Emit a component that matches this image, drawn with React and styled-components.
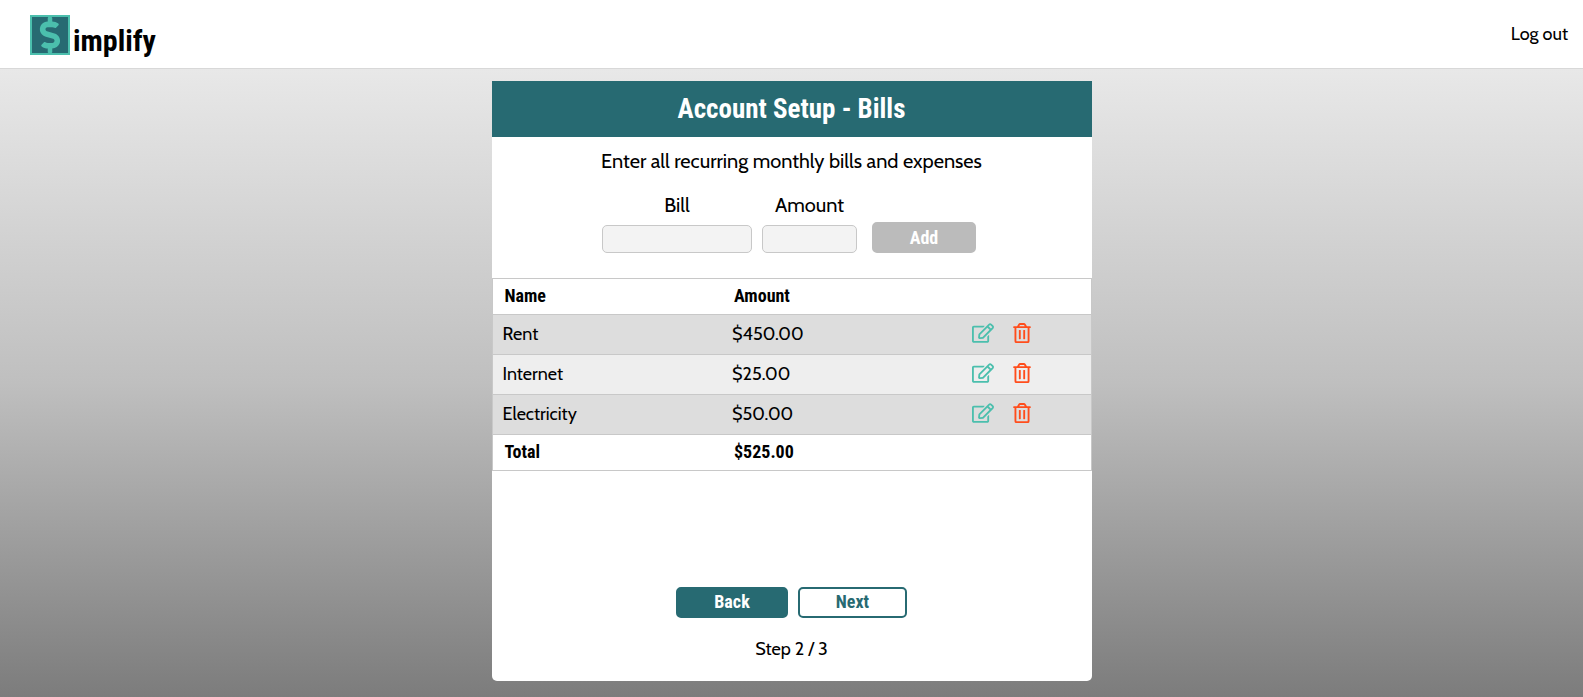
import React, { useState } from "react";
import styled, { createGlobalStyle } from "styled-components";
import { FaDollarSign, FaRegEdit, FaRegTrashAlt } from "react-icons/fa";

const teal = "#276a72";
const mint = "#4bbfad";
const line = "#c8c8c8";
const body = `Cabin, Lato, sans-serif`;
const heading = `"Roboto Condensed", "Liberation Sans Narrow", "Arial Narrow", sans-serif`;

const GlobalStyle = createGlobalStyle`
  *, *::before, *::after { box-sizing: border-box; }
  body {
    margin: 0;
    color: #000;
    font-family: ${body};
    font-size: 18px;
    line-height: 24px;
  }
`;

const Page = styled.div`
  min-height: 100vh;
  display: flex;
  flex-direction: column;
`;

const TopBar = styled.header`
  display: flex;
  justify-content: space-between;
  align-items: center;
  height: 69px;
  padding: 0 15px 0 30px;
  background: #fff;
  border-bottom: 1px solid #d8d8d8;
`;

const Brand = styled.a`
  display: flex;
  align-items: center;
  gap: 3px;
  padding-top: 2px;
  color: #000;
  text-decoration: none;
  font: bold 30px/40px ${heading};
`;

const BrandMark = styled.span`
  display: grid;
  place-items: center;
  width: 40px;
  height: 40px;
  background: ${teal};
  border: 2px solid ${mint};
  color: ${mint};
  font-size: 36px;
`;

const BrandName = styled.span`
  padding-top: 12px;
`;

const LogOut = styled.a`
  color: #000;
  text-decoration: none;
`;

const Main = styled.main`
  flex: 1;
  padding: 12px 16px 16px;
  background: linear-gradient(#e8e8e8, #bfbfbf, #7c7c7c);
`;

const Card = styled.section`
  display: flex;
  flex-direction: column;
  max-width: 600px;
  min-height: 600px;
  margin: 0 auto;
  background: #fff;
  border-radius: 0 0 5px 5px;
`;

const Title = styled.h1`
  margin: 0;
  padding: 8px;
  background: ${teal};
  color: #fff;
  text-align: center;
  font: bold 27px/40px ${heading};
`;

const Intro = styled.p`
  margin: 12px 0 20px;
  text-align: center;
  font-size: 20px;
`;

const BillForm = styled.form`
  display: flex;
  justify-content: center;
  align-items: flex-end;
  gap: 10px;
  margin-bottom: 25px;
  padding-right: 5px;
`;

const Field = styled.label`
  display: flex;
  flex-direction: column;
  gap: 8px;
  width: ${(p) => p.$width}px;
  text-align: center;
  font-size: 20px;
`;

const TextBox = styled.input`
  width: 100%;
  height: 28px;
  padding: 0 8px;
  background: #f3f3f3;
  border: 1px solid ${line};
  border-radius: 5px;
  font: 16px ${body};
`;

const Button = styled.button`
  width: ${(p) => p.$width}px;
  height: 31px;
  padding: 0 0 2px;
  border: 2px solid ${teal};
  border-radius: 5px;
  background: ${(p) => (p.$outline ? "#fff" : teal)};
  color: ${(p) => (p.$outline ? teal : "#fff")};
  font: bold 18px/24px ${heading};
  cursor: pointer;

  &:disabled {
    border-color: #bbb;
    background: #bbb;
    color: #fff;
    cursor: default;
  }
`;

const AddButton = styled(Button)`
  margin-left: 5px;
  padding: 0;
`;

const BillTable = styled.table`
  width: 100%;
  table-layout: fixed;
  border-collapse: collapse;
  border: 1px solid ${line};

  tr {
    border-bottom: 1px solid ${line};
  }
  th {
    height: 36px;
    padding: 0 12px 2px;
    text-align: left;
    font: bold 18px/24px ${heading};
  }
  td {
    height: 40px;
    padding: 0 10px 2px;
  }
  tbody tr:nth-child(odd) {
    background: #ddd;
  }
  tbody tr:nth-child(even) {
    background: #eee;
  }
`;

const DataCol = styled.col`
  width: 230px;
`;

const Actions = styled.div`
  display: flex;
  gap: 19px;
  padding: 0 0 1px 10px;
`;

const IconButton = styled.button`
  display: flex;
  padding: 0;
  border: 0;
  background: none;
  color: ${(p) => p.$color};
  cursor: pointer;

  svg {
    width: ${(p) => p.$width}px;
    height: 20px;
  }
`;

const CardFooter = styled.footer`
  display: flex;
  flex-direction: column;
  align-items: center;
  gap: 19px;
  margin-top: auto;
  padding-bottom: 20px;
`;

const StepButtons = styled.div`
  display: flex;
  gap: 10px;
`;

const StepLabel = styled.p`
  margin: 0;
`;

const bills = [
  { name: "Rent", amount: 450 },
  { name: "Internet", amount: 25 },
  { name: "Electricity", amount: 50 },
];

const money = (n) => `$${n.toFixed(2)}`;

export default function App() {
  const [name, setName] = useState("");
  const [amount, setAmount] = useState("");
  const total = bills.reduce((sum, b) => sum + b.amount, 0);

  return (
    <Page>
      <GlobalStyle />
      <TopBar>
        <Brand href="#">
          <BrandMark>
            <FaDollarSign />
          </BrandMark>
          <BrandName>implify</BrandName>
        </Brand>
        <LogOut href="#">Log out</LogOut>
      </TopBar>
      <Main>
        <Card>
          <Title>Account Setup - Bills</Title>
          <Intro>Enter all recurring monthly bills and expenses</Intro>
          <BillForm onSubmit={(e) => e.preventDefault()}>
            <Field $width={150}>
              Bill
              <TextBox value={name} onChange={(e) => setName(e.target.value)} />
            </Field>
            <Field $width={95}>
              Amount
              <TextBox value={amount} onChange={(e) => setAmount(e.target.value)} />
            </Field>
            <AddButton $width={104} disabled={!name || !amount}>
              Add
            </AddButton>
          </BillForm>
          <BillTable>
            <colgroup>
              <DataCol />
              <DataCol />
              <col />
            </colgroup>
            <thead>
              <tr>
                <th>Name</th>
                <th>Amount</th>
                <th aria-label="Actions" />
              </tr>
            </thead>
            <tbody>
              {bills.map((b) => (
                <tr key={b.name}>
                  <td>{b.name}</td>
                  <td>{money(b.amount)}</td>
                  <td>
                    <Actions>
                      <IconButton $color={mint} $width={22} aria-label={`Edit ${b.name}`}>
                        <FaRegEdit />
                      </IconButton>
                      <IconButton $color="#ff4d1c" $width={18} aria-label={`Delete ${b.name}`}>
                        <FaRegTrashAlt />
                      </IconButton>
                    </Actions>
                  </td>
                </tr>
              ))}
            </tbody>
            <tfoot>
              <tr>
                <th>Total</th>
                <th>{money(total)}</th>
                <th aria-label="Actions" />
              </tr>
            </tfoot>
          </BillTable>
          <CardFooter>
            <StepButtons>
              <Button $width={112}>Back</Button>
              <Button $width={109} $outline>
                Next
              </Button>
            </StepButtons>
            <StepLabel>Step 2 / 3</StepLabel>
          </CardFooter>
        </Card>
      </Main>
    </Page>
  );
}
